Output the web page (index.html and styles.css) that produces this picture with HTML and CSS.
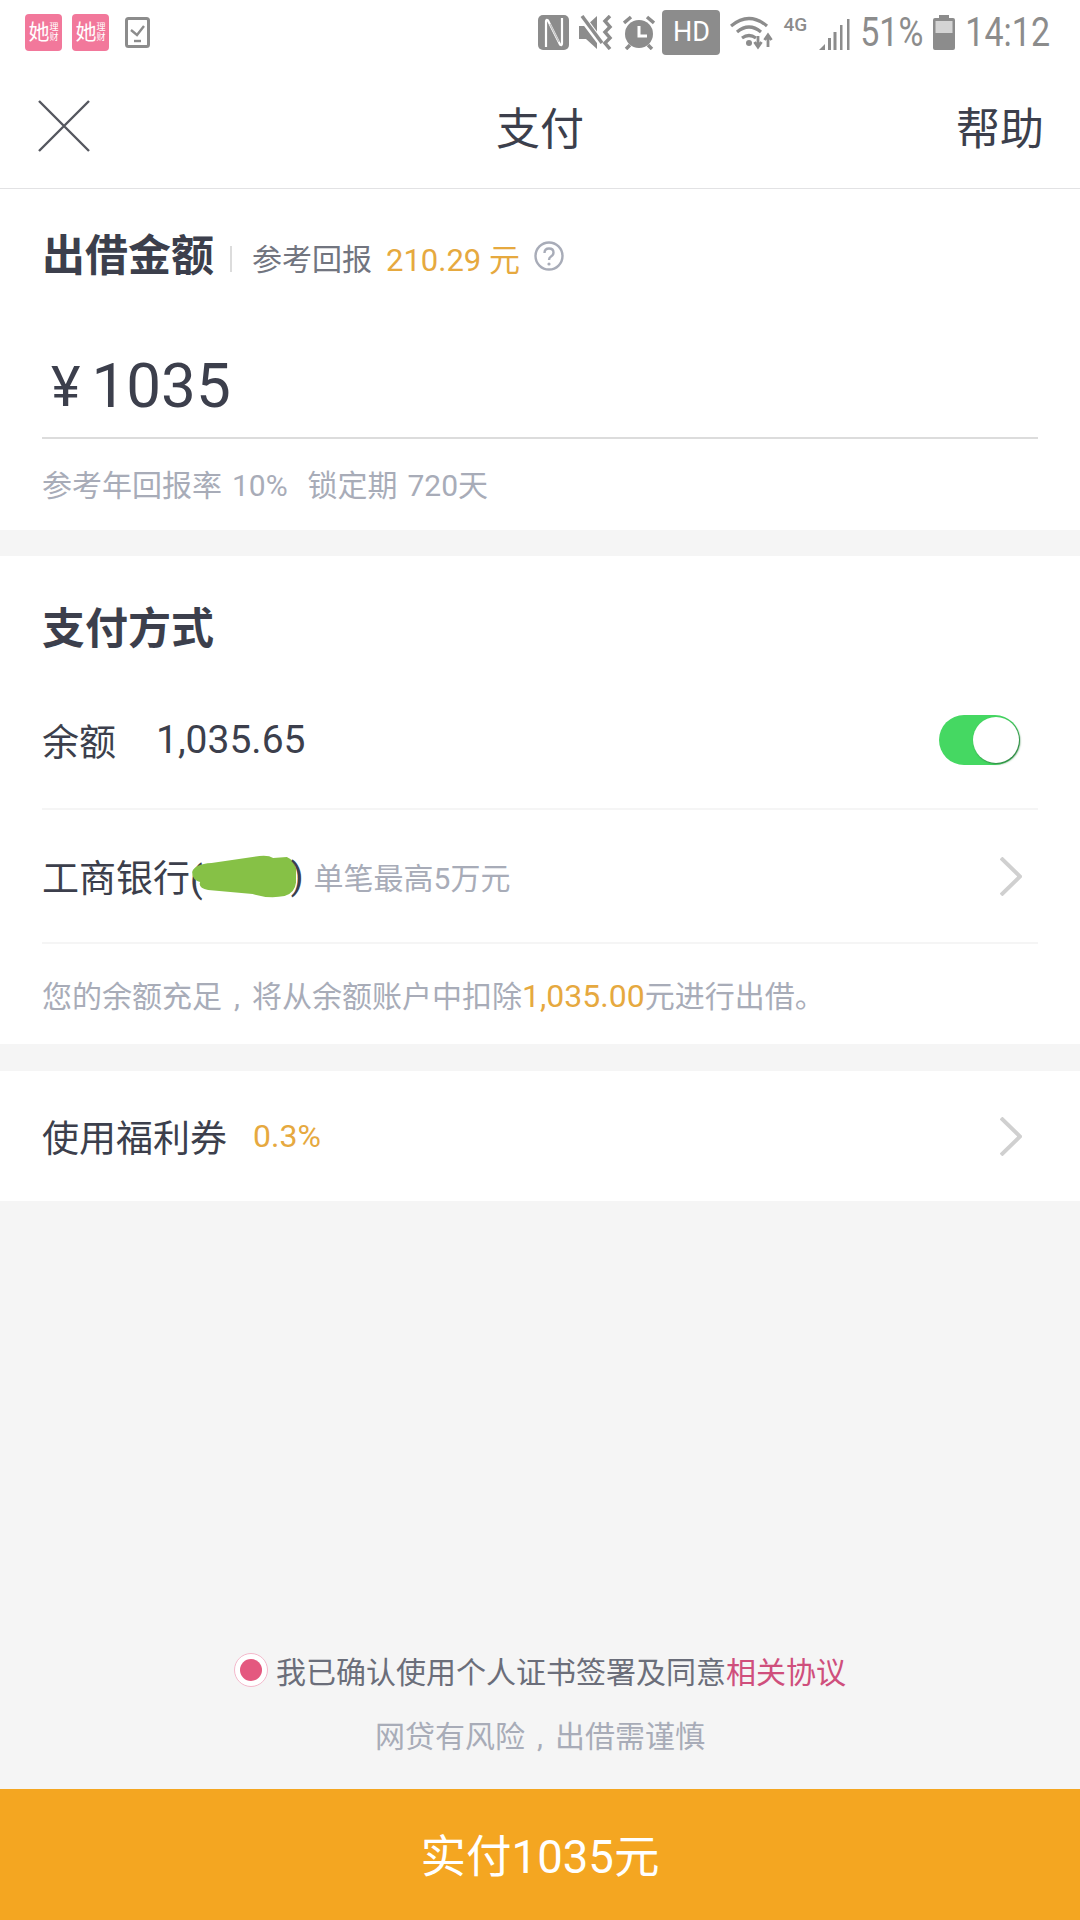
FILE: index.html
```html
<!DOCTYPE html>
<html>
    <head>
        <meta http-equiv="Content-Type" content="text/html; charset=UTF-8">
        <title>支付</title>
        <link rel="stylesheet" href="styles.css">
    </head>
    <body>
        <div class="page">
            <!-- status bar -->
            <div class="status-bar">
                <div class="status-left">
                    <div class="app-badge"><span class="app-big">她</span><span class="app-small">理财</span></div>
                    <div class="app-badge"><span class="app-big">她</span><span class="app-small">理财</span></div>
                    <svg class="task-icon" width="25" height="31" viewBox="0 0 25 31">
                        <rect x="1.500" y="1.500" width="22" height="28" rx="2" fill="none" stroke="#8c8c8c" stroke-width="3"/>
                        <path d="M6 13l6 5 7-9" fill="none" stroke="#8c8c8c" stroke-width="2.400"/>
                        <path d="M9 24h7" stroke="#8c8c8c" stroke-width="2.400"/>
                    </svg>
                </div>
                <div class="status-right">
                    <svg width="31" height="35" viewBox="0 0 31 35">
                        <rect width="31" height="35" rx="5" fill="#8c8c8c"/>
                        <path d="M8 32V6.500Q8 4 10 5.500L22 29.500Q24 31 24 28.500V3" fill="none" stroke="#fff" stroke-width="2.200"/>
                        <path d="M12 9l9 18" stroke="#c4c4c4" stroke-width="1.500"/>
                    </svg>
                    <svg width="34" height="35" viewBox="0 0 34 35">
                        <path d="M0 11h7L18 1v33L7 24H0z" fill="#8c8c8c"/>
                        <path d="M2 1l21 28" stroke="#fff" stroke-width="7"/>
                        <path d="M3 1l20 27" stroke="#8c8c8c" stroke-width="3.500"/>
                        <path d="M31 1l-5 5 5 6-5 5 5 6-5 5 5 6" fill="none" stroke="#8c8c8c" stroke-width="3.500"/>
                    </svg>
                    <svg width="32" height="35" viewBox="0 0 32 35">
                        <circle cx="16" cy="19" r="14" fill="#8c8c8c"/>
                        <path d="M16 11v10h8" fill="none" stroke="#fff" stroke-width="3"/>
                        <path d="M1 8l7-6M31 8l-7-6M7 30l-4 4M25 30l4 4" stroke="#8c8c8c" stroke-width="3.500"/>
                    </svg>
                    <div class="hd-badge">HD</div>
                    <svg width="43" height="35" viewBox="0 0 43 35">
                        <path d="M1 11q18-15 36 0M7 17q12-10 24 0M12 23q7-5 14 0" fill="none" stroke="#8c8c8c" stroke-width="3.200"/>
                        <circle cx="19" cy="28" r="3" fill="#8c8c8c"/>
                        <path d="M28 21v9M24.500 27l3.500 5 3.500-5M38 32v-10M34.500 25l3.500-5 3.500 5" fill="none" stroke="#8c8c8c" stroke-width="2.800"/>
                    </svg>
                    <span class="net-label">4G</span>
                    <svg class="signal" width="31" height="35" viewBox="0 0 31 35">
                        <path d="M0 35l6-6v6z" fill="#8c8c8c"/>
                        <path d="M9 23h3v12H9zM14.500 17h3v18h-3zM21 10h2.500v25H21zM28 4h2.500v31H28z" fill="#8c8c8c"/>
                    </svg>
                    <span class="status-text">51%</span>
                    <svg width="22" height="35" viewBox="0 0 22 35">
                        <path d="M6 0h10v3h4q2 0 2 2v28q0 2-2 2H2q-2 0-2-2V5q0-2 2-2h4z" fill="#8c8c8c"/>
                        <rect x="2.500" y="6" width="17" height="12" fill="#d4d4d4"/>
                    </svg>
                    <span class="status-text">14:12</span>
                </div>
            </div>

            <!-- nav -->
            <div class="nav">
                <svg class="close-icon" width="52" height="52" viewBox="0 0 52 52">
                    <path d="M1 1l50 50M51 1L1 51" stroke="#55575f" stroke-width="2.400"/>
                </svg>
                <div class="nav-title">支付</div>
                <div class="nav-help">帮助</div>
            </div>

            <!-- amount -->
            <div class="section">
                <div class="amount-head">
                    <span class="section-title">出借金额</span>
                    <span class="head-sep"></span>
                    <span class="head-label">参考回报</span>
                    <span class="gold head-value">210.29 元</span>
                    <svg class="help-icon" width="30" height="30" viewBox="0 0 30 30">
                        <circle cx="15" cy="15" r="13.500" fill="none" stroke="#a8acb8" stroke-width="2.400"/>
                        <path d="M10.500 12q0-4.500 4.500-4.500t4.500 4q0 2.500-2.500 4-2 1.200-2 3.500" fill="none" stroke="#a8acb8" stroke-width="2.400"/>
                        <circle cx="15" cy="23" r="1.600" fill="#a8acb8"/>
                    </svg>
                </div>
                <div class="amount-input"><span class="yen">¥</span>1035</div>
                <div class="amount-sub">参考年回报率 10%&nbsp;&nbsp;锁定期 720天</div>
            </div>

            <!-- payment -->
            <div class="section pay-section">
                <div class="pay-title"><span class="section-title">支付方式</span></div>
                <div class="row balance-row">
                    <span class="row-label">余额</span>
                    <span class="balance-value">1,035.65</span>
                    <div class="toggle"><div class="knob"></div></div>
                </div>
                <div class="row bank-row">
                    <span class="row-label bank-name">工商银行(<svg class="scribble" width="105" height="44" viewBox="0 0 92 44" preserveAspectRatio="none"><path d="M1 18Q3 10 18 9L60 2Q68 1 72 4L84 3Q94 8 92 24 93 38 82 42 68 45 54 40L15 36Q6 34 8 28 1 26 1 18z" fill="#86c146"/></svg>)</span>
                    <span class="bank-limit">单笔最高5万元</span>
                    <svg class="chevron" width="22" height="39" viewBox="0 0 22 39">
                        <path d="M1 1l19 18.500L1 38" fill="none" stroke="#d0d0d0" stroke-width="4"/>
                    </svg>
                </div>
                <div class="pay-note"><span>您的余额充足<span class="comma">,</span>将从余额账户中扣除<span class="gold note-value">1,035.00</span>元进行出借。</span></div>
            </div>

            <!-- coupon -->
            <div class="section coupon-section">
                <div class="row coupon-row">
                    <span class="row-label">使用福利券</span>
                    <span class="gold coupon-value">0.3%</span>
                    <svg class="chevron" width="22" height="39" viewBox="0 0 22 39">
                        <path d="M1 1l19 18.500L1 38" fill="none" stroke="#d0d0d0" stroke-width="4"/>
                    </svg>
                </div>
            </div>

            <!-- footer -->
            <div class="footer">
                <div class="agree">
                    <span class="radio"><span class="radio-dot"></span></span>
                    <span>我已确认使用个人证书签署及同意<span class="agree-link">相关协议</span></span>
                </div>
                <div class="risk">网贷有风险<span class="comma">,</span>出借需谨慎</div>
            </div>
            <div class="pay-btn">实付1035元</div>
        </div>
    </body>
</html>
```

FILE: styles.css
```css
/* page */
* {
    box-sizing: border-box;
}
body {
    margin: 0;
    font-family: Roboto, "Noto Sans CJK SC", sans-serif;
    color: #3c3f4c;
    background-color: #f5f5f5;
}
.page {
    width: 1080px;
    height: 1920px;
    display: flex;
    flex-direction: column;
    overflow: hidden;
}
.gold {
    color: #e6a93f;
}
.comma {
    display: inline-block;
    width: 1em;
    text-align: center;
}

/* status bar */
.status-bar {
    height: 64px;
    padding: 0 30px 0 25px;
    background-color: #fff;
    display: flex;
    align-items: center;
    justify-content: space-between;
}
.status-left {
    display: flex;
    align-items: center;
}
.app-badge {
    width: 37px;
    height: 37px;
    margin-right: 10px;
    background-color: #f2789b;
    border-radius: 4px;
    color: #fff;
    display: flex;
    align-items: center;
    justify-content: center;
}
.app-big {
    font-size: 21px;
    line-height: 1;
}
.app-small {
    width: 9px;
    font-size: 9px;
    line-height: 10px;
}
.task-icon {
    margin-left: 6px;
}
.status-right {
    display: flex;
    align-items: center;
    gap: 10px;
}
.hd-badge {
    width: 58px;
    height: 45px;
    margin-left: -3px;
    background-color: #8c8c8c;
    border-radius: 4px;
    color: #fff;
    font-size: 27px;
    line-height: 45px;
    text-align: center;
}
.net-label {
    align-self: flex-start;
    margin-top: 5px;
    font-size: 19px;
    font-weight: 500;
    line-height: 20px;
    color: #8c8c8c;
}
.signal {
    margin-left: 2px;
}
.status-text {
    font-size: 34px;
    color: #8c8c8c;
    transform: scaleY(1.18);
}

/* nav */
.nav {
    height: 125px;
    padding: 0 36px;
    background-color: #fff;
    border-bottom: 1px solid #e2e2e4;
    display: grid;
    grid-template-columns: 1fr auto 1fr;
    align-items: center;
}
.close-icon {
    margin-left: 2px;
}
.nav-title, .nav-help {
    font-size: 44px;
}
.nav-help {
    justify-self: end;
}

/* sections */
.section {
    padding: 0 42px;
    background-color: #fff;
}
.section-title {
    margin-bottom: 7px;
    font-size: 43px;
    font-weight: bold;
}
.amount-head {
    height: 132px;
    display: flex;
    align-items: center;
}
.head-sep {
    width: 2px;
    height: 26px;
    margin: 8px 20px 0 16px;
    background-color: #dcdcdc;
}
.head-label {
    margin-top: 4px;
    font-size: 30px;
    color: #72757f;
}
.head-value {
    margin: 4px 14px 0 14px;
    font-size: 31px;
}
.help-icon {
    margin-top: 2px;
}
.amount-input {
    height: 118px;
    padding-top: 12px;
    border-bottom: 2px solid #dcdcdc;
    display: flex;
    align-items: center;
    font-size: 62px;
}
.yen {
    margin: 4px 11px 0 9px;
    font-size: 56px;
}
.amount-sub {
    height: 91px;
    padding-bottom: 4px;
    display: flex;
    align-items: center;
    font-size: 30px;
    word-spacing: 2.500px;
    color: #a8acb8;
}
.pay-section {
    margin-top: 26px;
}
.pay-title {
    height: 144px;
    display: flex;
    align-items: center;
}
.row {
    display: flex;
    align-items: center;
    border-bottom: 2px solid #f5f5f5;
}
.row-label {
    font-size: 37px;
}
.balance-row {
    height: 110px;
    padding-bottom: 28px;
    padding-right: 18px;
}
.balance-value {
    margin-left: 40px;
    font-size: 39px;
}
.toggle {
    width: 81px;
    height: 50px;
    margin-left: auto;
    padding: 2px 1px;
    border-radius: 25px;
    background-color: #45d862;
    display: flex;
    justify-content: flex-end;
}
.knob {
    width: 46px;
    height: 46px;
    border-radius: 50%;
    background-color: #fff;
    box-shadow: 1px 1px 2px #2b7a3d;
}
.bank-row {
    height: 134px;
}
.bank-name {
    display: flex;
    align-items: center;
}
.scribble {
    margin: 0 -5px 0 -12px;
}
.bank-limit {
    margin-left: 10px;
    font-size: 30px;
    color: #a8acb8;
}
.chevron {
    margin-left: auto;
    margin-right: 16px;
}
.pay-note {
    height: 100px;
    display: flex;
    align-items: center;
    font-size: 30px;
    color: #a8acb8;
}
.note-value {
    font-size: 32px;
}
.coupon-section {
    margin-top: 27px;
}
.coupon-row {
    height: 130px;
    border-bottom: none;
}
.coupon-value {
    margin-left: 26px;
    font-size: 32px;
}

/* footer */
.footer {
    flex: 1;
    padding-bottom: 22px;
    display: flex;
    flex-direction: column;
    justify-content: flex-end;
    align-items: center;
}
.agree {
    height: 60px;
    margin-bottom: 7px;
    display: flex;
    align-items: center;
    font-size: 30px;
    color: #6b6e7a;
}
.radio {
    width: 34px;
    height: 34px;
    margin-right: 8px;
    border: 1px solid #f4b8cb;
    border-radius: 50%;
    background-color: #fff;
    display: flex;
    align-items: center;
    justify-content: center;
}
.radio-dot {
    width: 22px;
    height: 22px;
    border-radius: 50%;
    background-color: #e4587f;
}
.agree-link {
    color: #cf4f7c;
}
.risk {
    height: 60px;
    line-height: 60px;
    font-size: 30px;
    color: #a8acb8;
}
.pay-btn {
    height: 131px;
    background-color: #f4a621;
    color: #fff;
    font-size: 45.500px;
    line-height: 137px;
    text-align: center;
}
```
